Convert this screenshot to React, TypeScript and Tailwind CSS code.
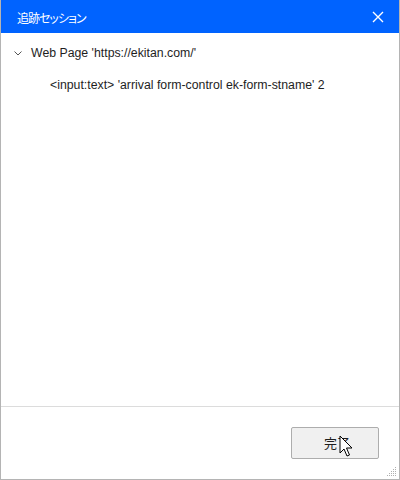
import React from 'react';

export default function App() {
  return (
    <div className="w-[400px] h-[480px] flex flex-col bg-white border border-[#b4b4b4] border-t-0 overflow-hidden" style={{ fontFamily: '"Noto Sans", "Noto Sans CJK JP", sans-serif' }}>
      {/* タイトルバー */}
      <div className="h-[33px] bg-[#0063ff] flex items-center justify-between pl-4 pr-3 text-white shrink-0">
        <span className="text-[12px] leading-none pt-[3px] tracking-[-1px]" style={{ fontFamily: '"Noto Sans CJK JP", sans-serif', fontFeatureSettings: '"palt"' }}>追跡セッション</span>
        <svg width="12" height="12" viewBox="0 0 12 12" className="mr-[3px]">
          <path d="M1 1 L11 11 M11 1 L1 11" stroke="white" strokeWidth="1.4" />
        </svg>
      </div>

      {/* ツリー */}
      <div className="flex-1 pt-[9px] text-[12.3px] text-[#1e1e1e]" style={{ fontFamily: '"Liberation Sans", sans-serif' }}>
        <div className="flex items-center h-[22px] pl-[13px]">
          <svg width="8" height="5" viewBox="0 0 8 5" className="mr-[9px]">
            <path d="M0.5 0.5 L4 4 L7.5 0.5" stroke="#555" strokeWidth="1" fill="none" />
          </svg>
          <span>Web Page 'https://ekitan.com/'</span>
        </div>
        <div className="flex items-center h-[22px] pl-[49px] mt-[10px]">
          <span>&lt;input:text&gt; 'arrival form-control ek-form-stname' 2</span>
        </div>
      </div>

      {/* フッター */}
      <div className="h-[73px] border-t border-[#dcdcdc] flex justify-end items-start pt-[20px] pr-[20px] relative shrink-0">
        <button className="w-[88px] h-[32px] bg-[#f0f0f0] border border-[#adadad] rounded-[2px] text-[13px] text-[#1e1e1e] relative" style={{ fontFamily: '"Noto Sans CJK JP", sans-serif' }}>
          <span className="relative left-[2px]">完了</span>
          <svg width="16" height="24" viewBox="0 0 16 24" className="absolute left-[47px] top-[7px]">
            <path d="M1 1 L1 18 L5 14 L8 21 L10.5 20 L7.5 13 L13 13 Z" fill="white" stroke="black" strokeWidth="1" strokeLinejoin="round" />
          </svg>
        </button>
        <svg width="10" height="10" viewBox="0 0 10 10" className="absolute right-[2px] bottom-[2px]">
          <g fill="#b0b0b0">
            <rect x="8" y="0" width="1" height="1" />
            <rect x="6" y="2" width="1" height="1" />
            <rect x="8" y="2" width="1" height="1" />
            <rect x="4" y="4" width="1" height="1" />
            <rect x="6" y="4" width="1" height="1" />
            <rect x="8" y="4" width="1" height="1" />
            <rect x="2" y="6" width="1" height="1" />
            <rect x="4" y="6" width="1" height="1" />
            <rect x="6" y="6" width="1" height="1" />
            <rect x="8" y="6" width="1" height="1" />
            <rect x="0" y="8" width="1" height="1" />
            <rect x="2" y="8" width="1" height="1" />
            <rect x="4" y="8" width="1" height="1" />
            <rect x="6" y="8" width="1" height="1" />
            <rect x="8" y="8" width="1" height="1" />
          </g>
        </svg>
      </div>
    </div>
  );
}
